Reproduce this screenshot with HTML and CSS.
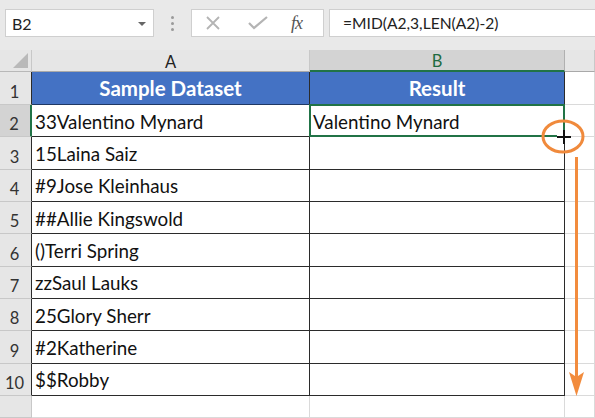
FILE: index.html
```html
<!DOCTYPE html>
<html>
<head>
<meta charset="utf-8">
<link rel="stylesheet" href="styles.css">
</head>
<body>
<div class="toolbar">
  <div class="namebox">
    <span>B2</span>
    <svg class="caret" width="10" height="6" viewBox="0 0 10 6"><path d="M1 1h8L5 5z" fill="#666"/></svg>
  </div>
  <div class="grip"><i></i><i></i><i></i></div>
  <div class="fxbox">
    <svg width="16" height="14" viewBox="0 0 16 14"><path d="M2 1L14 13M14 1L2 13" stroke="#b4b4b4" stroke-width="1.8" fill="none"/></svg>
    <svg width="20" height="14" viewBox="0 0 20 14"><path d="M1 7l5 5L19 1" stroke="#b4b4b4" stroke-width="2.2" fill="none"/></svg>
    <span class="fx">fx</span>
  </div>
  <div class="formula">=MID(A2,3,LEN(A2)-2)</div>
</div>
<div class="sheet">
  <div class="corner"><span class="tri"></span></div>
  <div class="colhead">A</div>
  <div class="colhead sel">B</div>
  <div class="colhead"></div>

  <div class="rowhead dark">1</div>
  <div class="cell t title">Sample Dataset</div>
  <div class="cell t title">Result</div>
  <div class="cell"></div>

  <div class="rowhead dark sel">2</div>
  <div class="cell t">33Valentino Mynard</div>
  <div class="cell t active">Valentino Mynard</div>
  <div class="cell"></div>

  <div class="rowhead dark">3</div>
  <div class="cell t">15Laina Saiz</div>
  <div class="cell t"></div>
  <div class="cell"></div>

  <div class="rowhead dark">4</div>
  <div class="cell t">#9Jose Kleinhaus</div>
  <div class="cell t"></div>
  <div class="cell"></div>

  <div class="rowhead dark">5</div>
  <div class="cell t">##Allie Kingswold</div>
  <div class="cell t"></div>
  <div class="cell"></div>

  <div class="rowhead dark">6</div>
  <div class="cell t">()Terri Spring</div>
  <div class="cell t"></div>
  <div class="cell"></div>

  <div class="rowhead dark">7</div>
  <div class="cell t">zzSaul Lauks</div>
  <div class="cell t"></div>
  <div class="cell"></div>

  <div class="rowhead dark">8</div>
  <div class="cell t">25Glory Sherr</div>
  <div class="cell t"></div>
  <div class="cell"></div>

  <div class="rowhead dark">9</div>
  <div class="cell t">#2Katherine</div>
  <div class="cell t"></div>
  <div class="cell"></div>

  <div class="rowhead dark">10</div>
  <div class="cell t">$$Robby</div>
  <div class="cell t"></div>
  <div class="cell"></div>

  <div class="rowhead"></div>
  <div class="cell"></div>
  <div class="cell"></div>
  <div class="cell"></div>
</div>
<svg class="annot" width="595" height="418" viewBox="0 0 595 418">
  <ellipse cx="563" cy="136.5" rx="20" ry="15.5" fill="none" stroke="#f08a3c" stroke-width="3"/>
  <path d="M564 130v14M557 137h14" stroke="#fff" stroke-width="4"/>
  <path d="M564 130v14M557 137h14" stroke="#111" stroke-width="2"/>
  <path d="M576.5 157V378" stroke="#f28c3e" stroke-width="3"/>
  <path d="M569 372L576.5 377L584 372L576.5 396z" fill="#f28c3e"/>
</svg>
</body>
</html>
```
FILE: styles.css
```css
* { box-sizing: border-box; }
html, body { margin: 0; padding: 0; }
body {
  width: 595px;
  height: 418px;
  overflow: hidden;
  background: #ffffff;
  font-family: "Lato", "Liberation Sans", sans-serif;
  position: relative;
}
.toolbar {
  height: 50px;
  background: #e9e9e9;
  display: flex;
  align-items: flex-start;
  padding: 9px 0 0 5px;
}
.namebox {
  width: 149px;
  height: 28px;
  background: #fff;
  border: 1px solid #cfcfcf;
  display: flex;
  align-items: center;
  justify-content: space-between;
  padding: 0 6px 0 6px;
  font-size: 16px;
  color: #222;
}
.caret { margin-top: 1px; }
.grip {
  width: 8px;
  margin-left: 14px;
  height: 28px;
  display: flex;
  flex-direction: column;
  align-items: center;
  justify-content: center;
  gap: 3px;
}
.grip i {
  width: 3px;
  height: 3px;
  border-radius: 50%;
  background: #9a9a9a;
  display: block;
}
.fxbox {
  margin-left: 15px;
  width: 133px;
  height: 28px;
  background: #fff;
  border: 1px solid #cfcfcf;
  display: flex;
  align-items: center;
  padding-left: 13px;
  gap: 25px;
}
.fxbox svg:nth-child(2) { margin-left: 2px; }
.fx {
  font-family: "Liberation Serif", serif;
  font-style: italic;
  font-size: 18px;
  color: #555;
  letter-spacing: -1px;
  margin-left: -2px;
}
.formula {
  margin-left: 5px;
  flex: 1;
  height: 28px;
  background: #fff;
  border: 1px solid #cfcfcf;
  border-right: none;
  display: flex;
  align-items: center;
  padding-left: 13px;
  font-size: 15.6px;
  color: #222;
}
.sheet {
  display: grid;
  grid-template-columns: 32px 278px 255px 1fr;
  grid-template-rows: 22px 33px repeat(9, 32.33px) 1fr;
  height: 368px;
}
.corner {
  background: #e6e6e6;
  border-right: 1px solid #c8c8c8;
  border-bottom: 1px solid #b8b8b8;
  position: relative;
}
.tri {
  position: absolute;
  right: 3px;
  bottom: 3px;
  width: 0;
  height: 0;
  border-left: 15px solid transparent;
  border-bottom: 15px solid #b9b9b9;
}
.colhead {
  background: #e6e6e6;
  border-right: 1px solid #c8c8c8;
  border-bottom: 1px solid #a9a9a9;
  display: flex;
  align-items: center;
  justify-content: center;
  font-size: 16.5px;
  color: #222;
  padding-top: 2px;
}
.colhead.sel {
  background: #d3d3d3;
  color: #1e6b40;
  border-bottom: 2px solid #217346;
  border-right: 1px solid #b0b0b0;
}
.rowhead {
  background: #e6e6e6;
  border-right: 1px solid #c8c8c8;
  border-bottom: 1px solid #c8c8c8;
  display: flex;
  align-items: flex-end;
  justify-content: center;
  font-size: 16.5px;
  color: #333;
  padding: 0 2px 2px 0;
}
.rowhead.dark { border-right: 1px solid #2b2b2b; }
.rowhead.sel {
  background: #d3d3d3;
  border-right: 2px solid #217346;
  color: #333;
}
.cell {
  border-right: 1px solid #dadada;
  border-bottom: 1px solid #dadada;
  display: flex;
  align-items: center;
  padding: 1px 0 0 3px;
  font-size: 18.8px;
  color: #111;
  white-space: nowrap;
}
.cell.t {
  border-right: 1px solid #2b2b2b;
  border-bottom: 1px solid #2b2b2b;
}
.cell.title {
  background: #4472c4;
  color: #fff;
  font-weight: 700;
  justify-content: center;
  font-size: 20.5px;
  padding: 0;
  border-bottom: 1px solid #1f3864;
}
.cell.active {
  position: relative;
}
.cell.active::after {
  content: "";
  position: absolute;
  left: -1px;
  top: -1px;
  right: -1px;
  bottom: -1px;
  border: 2px solid #217346;
}
.annot {
  position: absolute;
  left: 0;
  top: 0;
  pointer-events: none;
}
```
